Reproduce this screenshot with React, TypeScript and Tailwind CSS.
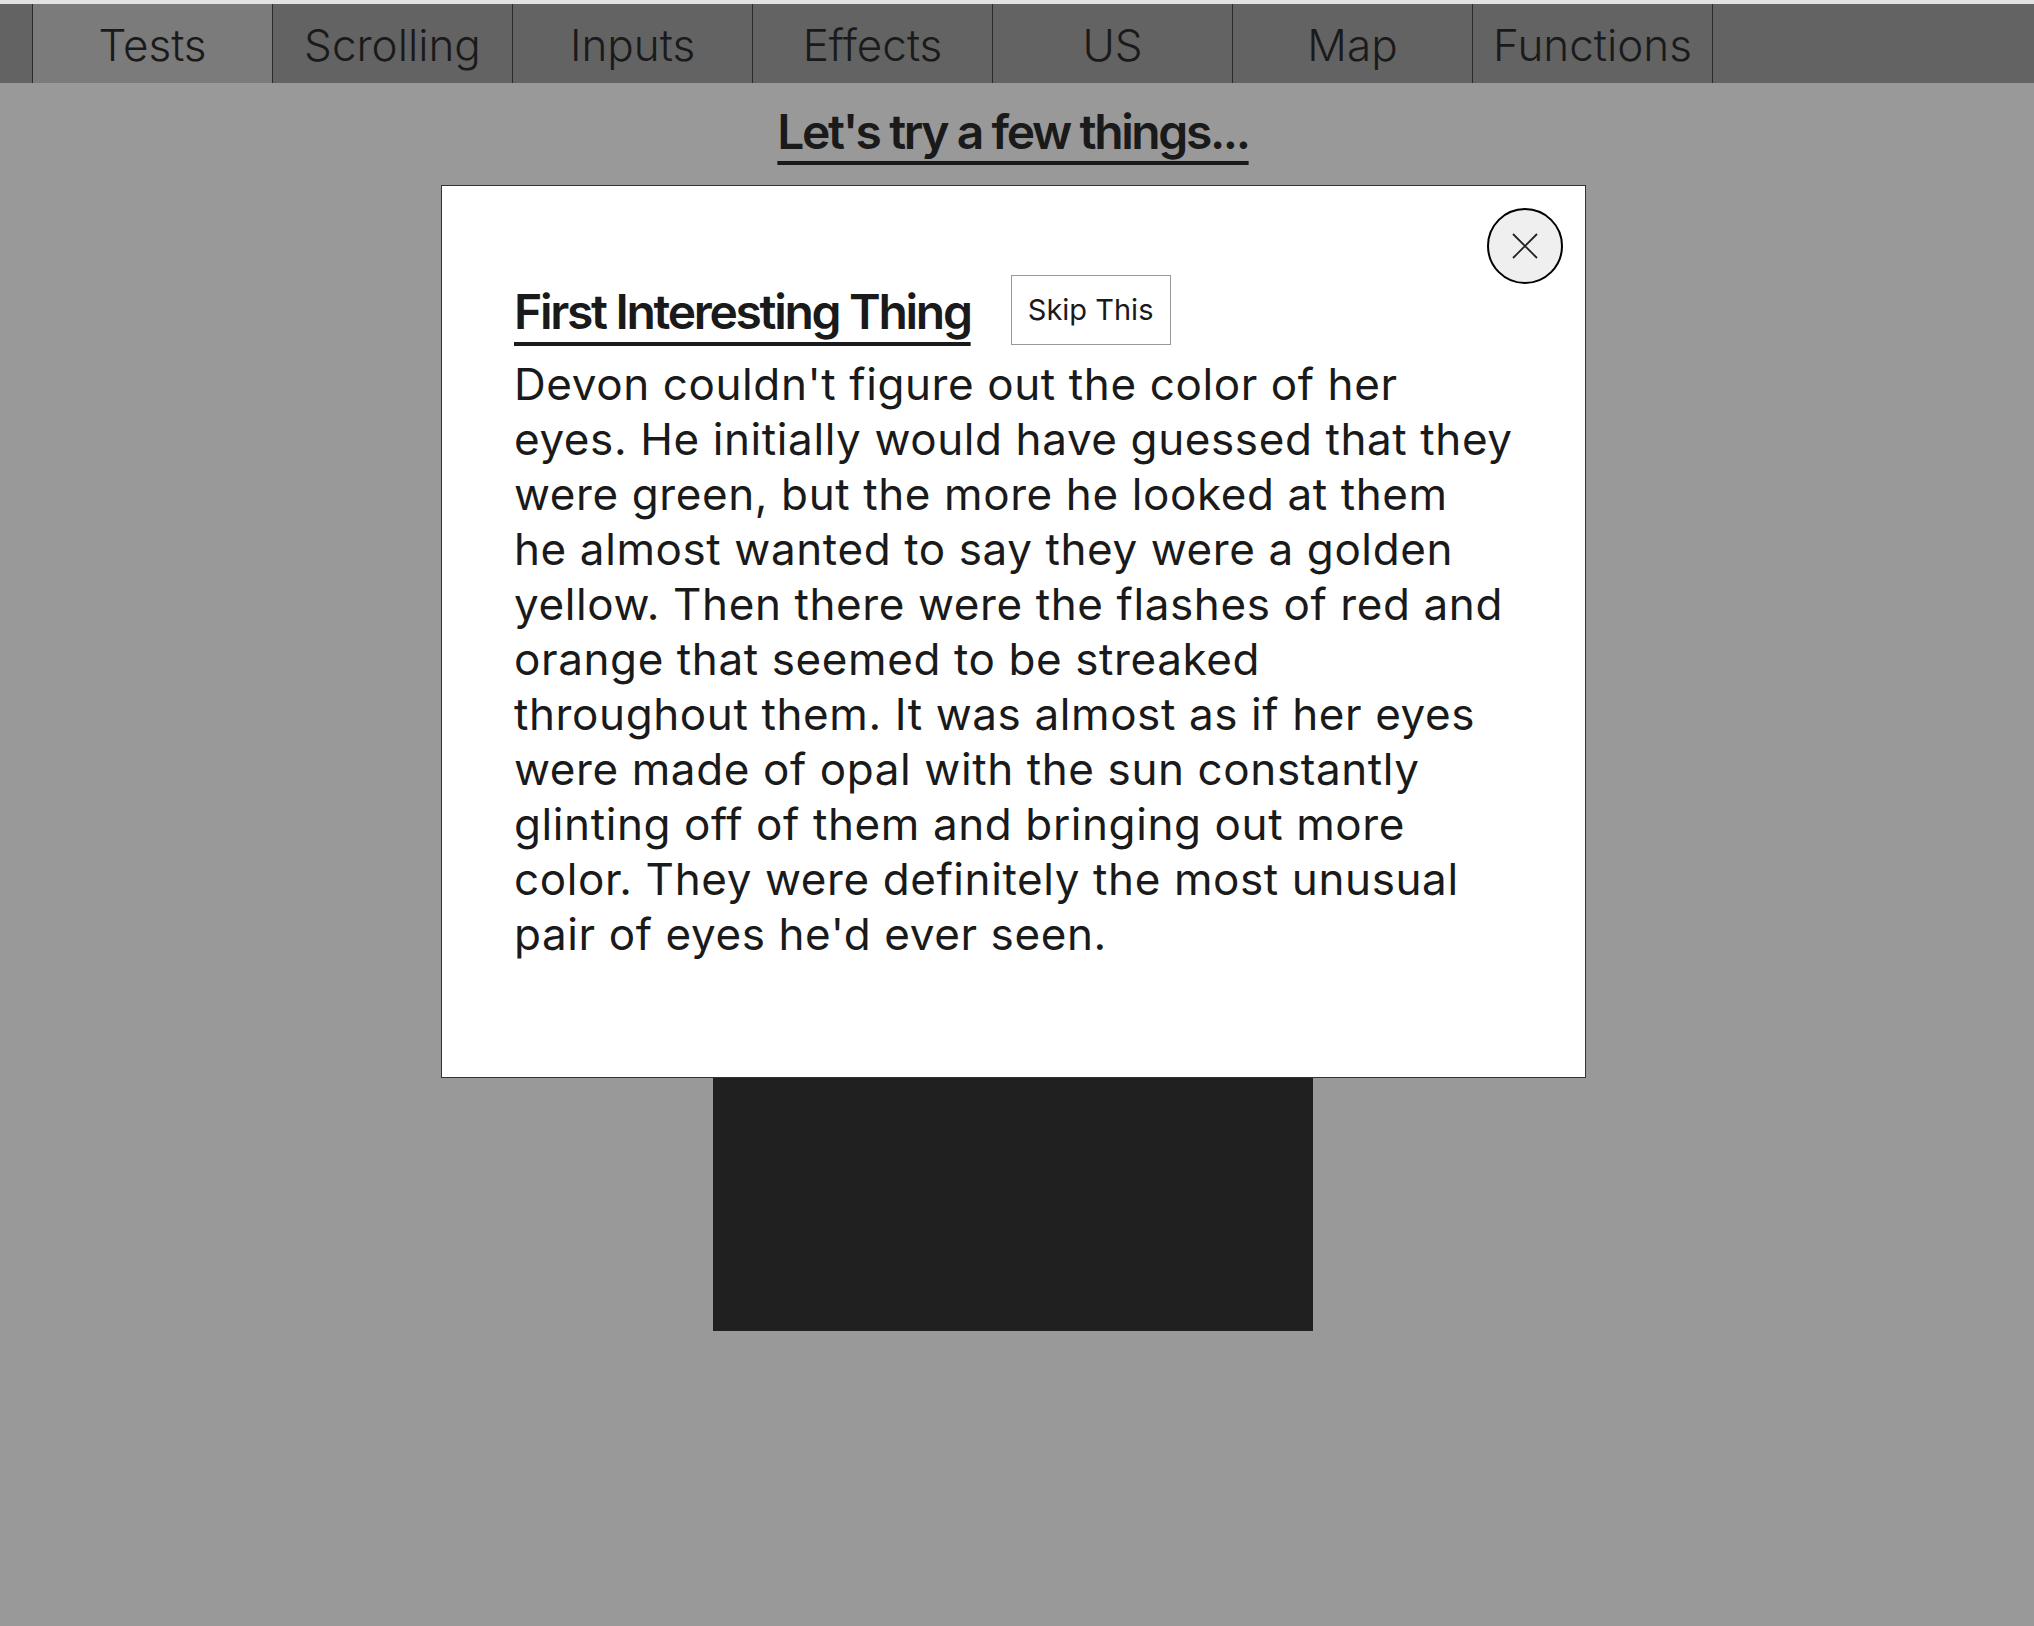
import React from "react";

const tabs = ["Tests", "Scrolling", "Inputs", "Effects", "US", "Map", "Functions"];

const lines = [
  "Devon couldn't figure out the color of her",
  "eyes. He initially would have guessed that they",
  "were green, but the more he looked at them",
  "he almost wanted to say they were a golden",
  "yellow. Then there were the flashes of red and",
  "orange that seemed to be streaked",
  "throughout them. It was almost as if her eyes",
  "were made of opal with the sun constantly",
  "glinting off of them and bringing out more",
  "color. They were definitely the most unusual",
  "pair of eyes he'd ever seen.",
];

export default function App() {
  return (
    <div
      className="relative w-full h-[1626px] bg-[#999999] overflow-hidden text-[#1a1a1a]"
      style={{ fontFamily: "Inter, 'Noto Sans', sans-serif" }}
    >
      <div className="h-[4px] bg-[#e2e2e2]" />
      <nav className="flex h-[79px] bg-[#636363]">
        <div className="w-[33px] border-r border-[#2a2a2a]" />
        {tabs.map((t, i) => (
          <div
            key={t}
            className={`w-[240px] flex items-center justify-center border-r border-[#2a2a2a] text-[44px] font-light pt-[2px] ${
              i === 0 ? "bg-[#7b7b7b]" : ""
            }`}
          >
            {t}
          </div>
        ))}
      </nav>
      <div className="w-[2026px] flex flex-col items-center">
        <h1 className="mt-[21px] text-[48px] font-semibold tracking-[-2.4px] leading-[56px] underline decoration-[4px] underline-offset-[12px] [text-decoration-skip-ink:none]">
          Let's try a few things...
        </h1>
        <div className="mt-[140px] w-[600px] h-[1031px] bg-[#202020]" />
      </div>

      <div className="absolute left-[441px] top-[185px] w-[1145px] h-[893px] bg-white border border-[#333333]">
        <button className="absolute right-[22px] top-[22px] w-[76px] h-[76px] rounded-full border-2 border-black bg-[#efefef] flex items-center justify-center">
          <svg width="26" height="26" viewBox="0 0 26 26">
            <path d="M1 1 L25 25 M25 1 L1 25" stroke="#222" strokeWidth="1.8" fill="none" />
          </svg>
        </button>
        <div className="pl-[72px] pr-[40px] pt-[89px]">
          <div className="flex items-center gap-[40px]">
            <h2 className="pt-[3px] text-[48px] font-semibold tracking-[-2.3px] leading-[60px] underline decoration-[4px] underline-offset-[13px] [text-decoration-skip-ink:none]">
              First Interesting Thing
            </h2>
            <button className="h-[70px] w-[160px] border border-[#999999] text-[29px] bg-white">
              Skip This
            </button>
          </div>
          <p className="mt-[12px] text-[44px] leading-[55px] tracking-[0.6px]">
            {lines.map((l) => (
              <span key={l} className="block whitespace-nowrap">
                {l}
              </span>
            ))}
          </p>
        </div>
      </div>
    </div>
  );
}
